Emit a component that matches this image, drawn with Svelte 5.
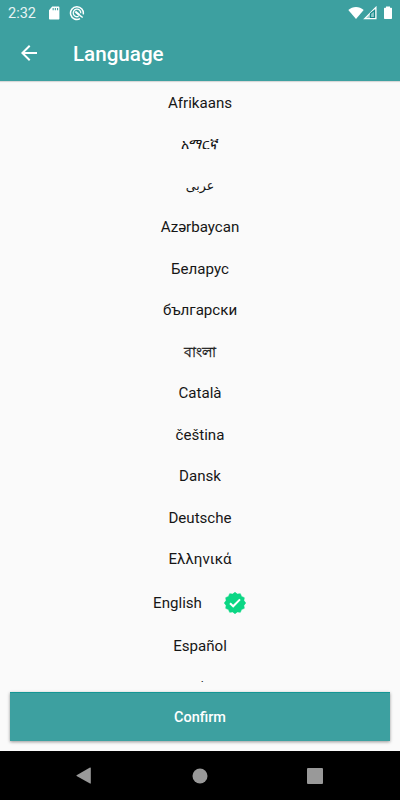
<script>
	const languages = [
		{ name: "Afrikaans", code: "af" },
		{ name: "አማርኛ", code: "am" },
		{ name: "عربى", code: "ar" },
		{ name: "Azərbaycan", code: "az" },
		{ name: "Беларус", code: "be" },
		{ name: "български", code: "bg" },
		{ name: "বাংলা", code: "bn" },
		{ name: "Català", code: "ca" },
		{ name: "čeština", code: "cs" },
		{ name: "Dansk", code: "da" },
		{ name: "Deutsche", code: "de" },
		{ name: "Ελληνικά", code: "el" },
		{ name: "English", code: "en" },
		{ name: "Español", code: "es" },
		{ name: "فارسی", code: "fa" },
	];

	let selected = $state("en");

	// twelve-pointed seal around 12,12
	const seal = Array.from({ length: 24 }, (_, i) => {
		const r = i % 2 ? 9.2 : 10.7;
		const a = (i * Math.PI) / 12;
		return `${(12 + r * Math.sin(a)).toFixed(2)},${(12 - r * Math.cos(a)).toFixed(2)}`;
	}).join(" ");
</script>

<div class="screen">
	<header>
		<div class="status">
			<span class="time">2:32</span>
			<svg class="sd" width="12" height="14" viewBox="0 0 12 14">
				<path fill="#fff" fill-rule="evenodd" d="M4.200.6h6.200c.6 0 1 .4 1 1v10.800c0 .6-.4 1-1 1H2c-.6 0-1-.4-1-1V4.200zM4.600 2v2.300h1.100V2zM6.800 2v2.300h1.100V2zM9 2v2.300h1.100V2z" />
			</svg>
			<svg class="round" width="16" height="16" viewBox="0 0 16 16" fill="none" stroke="#fff">
				<path stroke-width="1.5" d="M11 13.700A6.400 6.400 0 1 1 14.200 9.400" />
				<path stroke-width="1.300" d="M9.600 11.400A3.800 3.800 0 1 1 11.800 8.200" />
				<path stroke-width="2.200" d="M6.300 6.500l4.200 3.700" />
				<path stroke-width="1.500" d="M10.400 10.200l3.300 2.300" />
			</svg>
			<span class="grow"></span>
			<svg class="wifi" width="16" height="14" viewBox="0 0 16 14">
				<path fill="#fff" d="M.3 4C4.700.1 11.300.1 15.700 4L8 13z" />
			</svg>
			<svg class="signal" width="14" height="14" viewBox="0 0 14 14">
				<path fill="#fff" fill-opacity=".5" stroke="#fff" stroke-width="1.300" d="M1.700 12.600L12.900 1.400v11.200z" />
				<path fill="#8cc8c8" stroke="#16898a" stroke-width="1.200" d="M7.500 11.500V7.500L11.500 4.500v7z" />
			</svg>
			<svg class="battery" width="10" height="14" viewBox="0 0 10 14">
				<path fill="#fff" d="M3 .5h4v1.200h1.300c.4 0 .7.3.7.7v9.900c0 .4-.3.7-.7.7H1.700c-.4 0-.7-.3-.7-.7V2.400c0-.4.3-.7.7-.7H3z" />
			</svg>
		</div>
		<div class="toolbar">
			<button class="back" aria-label="Back">
				<svg width="24" height="24" viewBox="0 0 24 24">
					<path fill="#fff" d="M20 11H7.830l5.590-5.590L12 4l-8 8 8 8 1.410-1.410L7.830 13H20v-2z" />
				</svg>
			</button>
			<h1>Language</h1>
		</div>
	</header>

	<main>
		{#each languages as language (language.code)}
			<button
				class="row"
				class:selected={language.code === selected}
				lang={language.code}
				onclick={() => (selected = language.code)}
			>
				<span>{language.name}</span>
				{#if language.code === selected}
					<svg width="24" height="24" viewBox="0 0 24 24">
						<polygon points={seal} fill="#0bd684" stroke="#0bd684" stroke-width=".6" stroke-linejoin="round" />
						<path d="M7 12.200l3.200 3.100 6.800-6.900" fill="none" stroke="#fff" stroke-width="2" />
					</svg>
				{/if}
			</button>
		{/each}
	</main>

	<footer>
		<button class="confirm">Confirm</button>
	</footer>

	<nav>
		<svg width="16" height="18" viewBox="0 0 16 18">
			<path fill="#999" d="M.6 8.200L14 .6c.4-.2.800 0 .800.4v15.200c0 .4-.4.6-.8.4L.6 9c-.3-.2-.3-.6 0-.8z" />
		</svg>
		<svg width="16" height="16" viewBox="0 0 16 16">
			<circle cx="8" cy="8" r="7.500" fill="#999" />
		</svg>
		<svg width="16" height="16" viewBox="0 0 16 16">
			<rect width="16" height="16" rx="1" fill="#999" />
		</svg>
	</nav>
</div>

<style>
	:global(body) {
		background: #fafafa;
	}

	.screen {
		display: flex;
		flex-direction: column;
		height: 800px;
		width: 400px;
		overflow: hidden;
		font-family: Roboto, "Noto Sans", "DejaVu Sans", sans-serif;
		background: #fafafa;
	}

	button {
		border: 0;
		padding: 0;
		background: none;
		font-family: inherit;
	}

	svg {
		display: block;
		flex: none;
	}

	header {
		height: 81px;
		flex: none;
		background: #3da0a0;
		color: #fff;
		box-shadow: 0 1px 1px #0002;
	}

	.status {
		display: flex;
		align-items: center;
		height: 25px;
		padding: 0 7px 0 8px;
	}

	.time {
		width: 40px;
		padding-top: 1px;
		font-size: 14.500px;
		color: #e8f4f4;
	}

	.round {
		margin-left: 9px;
	}

	.wifi {
		margin-right: -1px;
	}

	.grow {
		flex: 1;
	}

	.battery {
		margin-left: 6px;
	}

	.toolbar {
		display: flex;
		align-items: center;
		height: 56px;
		padding-left: 17px;
	}

	.back {
		width: 24px;
		height: 24px;
		margin-top: -1px;
	}

	h1 {
		margin: 2px 0 0 32px;
		font-size: 20.600px;
		font-weight: 500;
	}

	main {
		height: 601px;
		flex: none;
		padding-top: 1px;
		box-sizing: border-box;
		overflow: hidden;
	}

	.row {
		display: flex;
		align-items: center;
		justify-content: center;
		width: 100%;
		height: 41.500px;
		font-size: 15.100px;
		color: #161616;
	}

	.row:lang(am) {
		font-size: 14.200px;
	}

	.row:lang(ar),
	.row:lang(fa) {
		font-size: 12.500px;
	}

	.row:lang(fa) {
		padding: 0 16px 2px 0;
	}

	.row:lang(bn) {
		padding-top: 2px;
		font-size: 14.400px;
		-webkit-text-stroke: 0.3px;
	}

	.selected {
		height: 45px;
		gap: 21px;
	}

	footer {
		flex: 1;
		padding: 10px 10px 10px;
	}

	.confirm {
		display: block;
		width: 100%;
		height: 49px;
		background: #3da0a0;
		border-top: 1px solid #149694;
		box-shadow: 0 1px 3px #0006;
		color: #fff;
		font-size: 14.500px;
		font-weight: 500;
	}

	nav {
		display: flex;
		align-items: center;
		justify-content: space-between;
		height: 49px;
		box-sizing: border-box;
		flex: none;
		padding: 0 77px 0 76px;
		background: #000;
	}
</style>
